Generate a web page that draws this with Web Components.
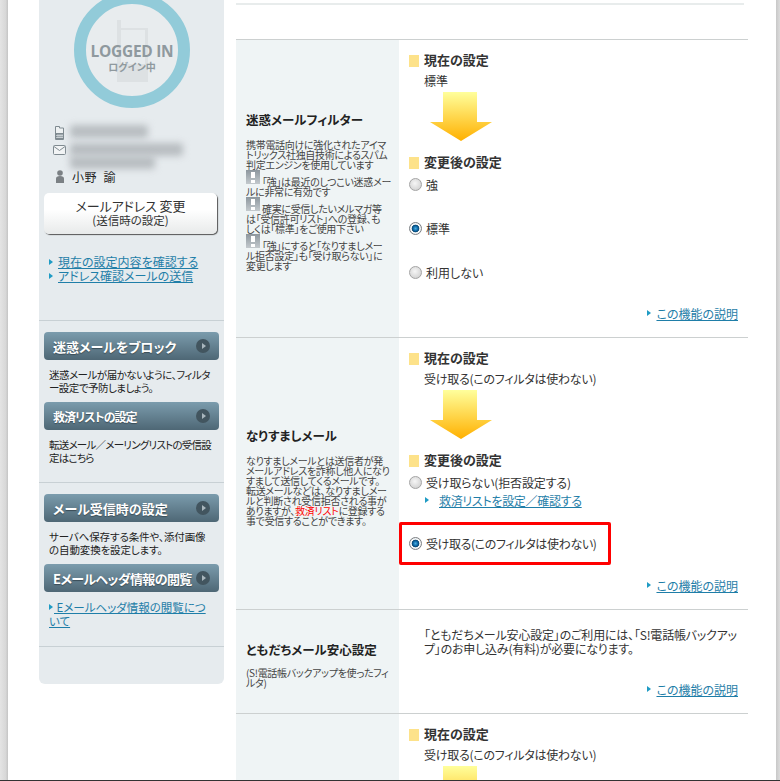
<!DOCTYPE html>
<html lang="ja">
<head>
<meta charset="utf-8">
<title>メール設定</title>
<style>
  html, body { margin: 0; height: 781px; overflow: hidden; background: #fff; }
  body { font-family: "Noto Sans CJK JP", "Liberation Sans", sans-serif; color: #222; font-feature-settings: "palt"; }
</style>
</head>
<body>
<app-page>
  <side-bar slot="side"></side-bar>
  <setting-row slot="main" label-title="迷惑メールフィルター" height="297" pad="14">
    <warn-note slot="desc">携帯電話向けに強化されたアイマ<br>トリックス社独自技術によるスパム<br>判定エンジンを使用しています<br><warn-icon></warn-icon> 「強」は最近のしつこい迷惑メー<br>ルに非常に有効です<br><warn-icon></warn-icon> 確実に受信したいメルマガ等<br>は「受信許可リスト」への登録、も<br>しくは「標準」をご使用下さい<br><warn-icon></warn-icon> 「強」にすると「なりすましメー<br>ル拒否設定」も「受け取らない」に<br>変更します</warn-note>
    <section-head>現在の設定</section-head>
    <current-value>標準</current-value>
    <down-arrow></down-arrow>
    <section-head>変更後の設定</section-head>
    <radio-option>強</radio-option>
    <radio-option gap="30" checked>標準</radio-option>
    <radio-option gap="30">利用しない</radio-option>
    <func-link>この機能の説明</func-link>
  </setting-row>
  <setting-row slot="main" label-title="なりすましメール" height="271" pad="14">
    <warn-note slot="desc">なりすましメールとは送信者が発<br>メールアドレスを詐称し他人になり<br>すまして送信してくるメールです。<br>転送メールなどは、なりすましメー<br>ルと判断され受信拒否される事が<br>ありますが、<span style="color:#f00">救済リスト</span>に登録する<br>事で受信することができます。</warn-note>
    <section-head>現在の設定</section-head>
    <current-value style="letter-spacing:-.25px">受け取る(このフィルタは使わない)</current-value>
    <down-arrow></down-arrow>
    <section-head>変更後の設定</section-head>
    <radio-option style="letter-spacing:-.15px">受け取らない(拒否設定する)</radio-option>
    <sub-link>救済リストを設定／確認する</sub-link>
    <red-frame><radio-option gap="0" checked style="letter-spacing:-.35px">受け取る(このフィルタは使わない)</radio-option></red-frame>
    <func-link>この機能の説明</func-link>
  </setting-row>
  <setting-row slot="main" label-title="ともだちメール安心設定" height="103" pad="18">
    <warn-note slot="desc" style="margin-top:-2px;letter-spacing:-.3px">(S!電話帳バックアップを使ったフィ<br>ルタ)</warn-note>
    <plain-note style="letter-spacing:-.2px">「ともだちメール安心設定」のご利用には、「S!電話帳バックアッ<br>プ」のお申し込み(有料)が必要になります。</plain-note>
    <func-link>この機能の説明</func-link>
  </setting-row>
  <setting-row slot="main" height="66" pad="14" last>
    <section-head>現在の設定</section-head>
    <current-value style="letter-spacing:-.25px">受け取る(このフィルタは使わない)</current-value>
    <down-arrow></down-arrow>
  </setting-row>
</app-page>

<script>
class AppPage extends HTMLElement {
  constructor() {
    super();
    this.attachShadow({ mode: "open" });
    this.shadowRoot.innerHTML = `
      <style>
        :host { display: flex; height: 780px; width: 780px; border-bottom: 1px solid #333; overflow: hidden; box-sizing: content-box; }
        .edge-l { width: 8px; background: linear-gradient(90deg, #e4e4e4, #d8d8d8 70%, #c4c4c4); flex: none; }
        .edge-r { width: 4px; background: linear-gradient(90deg, #c8c8c8, #dcdcdc); flex: none; margin-left: 28px; }
        .side { width: 185px; margin-left: 31px; flex: none; }
        .main { width: 512px; margin-left: 12px; flex: none; }
        .topbar { height: 2px; width: 508px; margin-top: 3px; background: #e8ecec; }
        .gap { height: 34px; border-bottom: 1px solid #ccd0d0; }
      </style>
      <div class="edge-l"></div>
      <div class="side"><slot name="side"></slot></div>
      <div class="main">
        <div class="topbar"></div>
        <div class="gap"></div>
        <slot name="main"></slot>
      </div>
      <div class="edge-r"></div>
    `;
  }
}

class SideBar extends HTMLElement {
  constructor() {
    super();
    this.attachShadow({ mode: "open" });
    this.shadowRoot.innerHTML = `
      <style>
        :host { display: block; height: 684px; background: #e6ebee; border-radius: 0 0 6px 6px; overflow: hidden; font-size: 11px; line-height: 13px; color: #222; }
        .top { height: 328px; }
        .mid { height: 150px; border-top: 1px solid #c8d0d4; padding: 11px 5px 0; }
        .mid2 { height: 152px; border-top: 1px solid #c8d0d4; padding: 11px 5px 0; }
        .end { border-top: 1px solid #c8d0d4; }
        .account { padding: 0 5px; }
        .links { margin: 21px 0 0 5px; font-size: 12px; line-height: 14px; }
        .links div { white-space: nowrap; }
        a { color: #1f7ea8; text-decoration: underline; }
        .links tri-mark { margin-right: 5px; }
        .elink { font-size: 11.500px; margin-left: 1px; }
      </style>
      <div class="top">
        <login-badge></login-badge>
        <user-info></user-info>
        <div class="account">
          <address-button></address-button>
          <div class="links">
            <div><tri-mark></tri-mark><a href="#">現在の設定内容を確認する</a></div>
            <div><tri-mark></tri-mark><a href="#">アドレス確認メールの送信</a></div>
          </div>
        </div>
      </div>
      <div class="mid">
        <side-button>迷惑メールをブロック</side-button>
        <side-note style="letter-spacing:-.5px">迷惑メールが届かないように、フィルタ<br>ー設定で予防しましょう。</side-note>
        <side-button style="letter-spacing:-1px;font-size:12px">救済リストの設定</side-button>
        <side-note style="letter-spacing:-.75px">転送メール／メーリングリストの受信設<br>定はこちら</side-note>
      </div>
      <div class="mid2">
        <side-button>メール受信時の設定</side-button>
        <side-note style="letter-spacing:-.12px">サーバへ保存する条件や、添付画像<br>の自動変換を設定します。</side-note>
        <side-button style="letter-spacing:-.6px">Eメールヘッダ情報の閲覧</side-button>
        <side-note><tri-mark></tri-mark><a class="elink" href="#"> Eメールヘッダ情報の閲覧につ<br>いて</a></side-note>
      </div>
      <div class="end"></div>
    `;
  }
}

class LoginBadge extends HTMLElement {
  constructor() {
    super();
    this.attachShadow({ mode: "open" });
    this.shadowRoot.innerHTML = `
      <style>
        :host { display: block; position: relative; width: 116px; height: 116px; margin: -8px 0 0 35px; }
        svg { display: block; }
        .t { position: absolute; left: 0; right: 0; text-align: center; color: #8f999e; white-space: nowrap; font-family: "Open Sans", "Liberation Sans", sans-serif; }
        .en { top: 49px; font-size: 15.500px; line-height: 20px; font-weight: 700; letter-spacing: -.3px; }
        .ja { top: 69px; font-size: 10px; line-height: 12px; font-weight: 700; font-family: "Noto Sans CJK JP", sans-serif; }
      </style>
      <svg width="116" height="116" viewBox="0 0 116 116">
        <circle cx="58" cy="58" r="52" fill="#e8ecee" stroke="#92cbd9" stroke-width="12"/>
        <path d="M43 28h4v8h27v54H43z" fill="#dde1e3"/>
        <path d="M47 38h24v34H47z" fill="#e8ecee"/>
      </svg>
      <div class="t en">LOGGED IN</div>
      <div class="t ja">ログイン中</div>
    `;
  }
}

class UserInfo extends HTMLElement {
  constructor() {
    super();
    this.attachShadow({ mode: "open" });
    this.shadowRoot.innerHTML = `
      <style>
        :host { display: grid; grid-template-columns: 17px 1fr; margin: 16px 0 10px 14px; height: 59px; grid-template-rows: 18px 28px 13px; font-size: 12px; }
        svg { display: block; }
        .blur { background: #b8bdc1; filter: blur(3.500px); height: 13px; border-radius: 3px; }
        .name { line-height: 13px; padding-left: 2px; letter-spacing: .5px; white-space: pre; }
      </style>
      <svg width="9" height="14" viewBox="0 0 9 14" style="margin:2px 0 0 2px">
        <path d="M.5.500h4V2h4v11.500H.5z" fill="#eef1f2" stroke="#7f8a90"/>
        <path d="M1 7h7v6H1z" fill="#7f8a90"/>
        <path d="M3 8v4M5 8v4M7 8v4M1 9.500h7M1 11.500h7" stroke="#e6ebee" stroke-width=".6"/>
      </svg>
      <div class="blur" style="width:78px;margin-top:1px"></div>
      <svg width="13" height="10" viewBox="0 0 13 10" style="margin:3px 0 0 0">
        <rect x=".5" y=".5" width="12" height="9" rx="1" fill="#f2f4f5" stroke="#7f8a90"/>
        <path d="M1 1.500l5.500 4 5.500-4" fill="none" stroke="#7f8a90"/>
      </svg>
      <div style="display:flex;flex-direction:column;padding-top:1px">
        <div class="blur" style="width:113px"></div>
        <div class="blur" style="width:85px"></div>
      </div>
      <svg width="10" height="13" viewBox="0 0 10 13" style="margin-left:2px">
        <circle cx="5" cy="3" r="2.800" fill="#7b8084"/>
        <path d="M1 13V8.500Q1 6 5 6t4 2.500V13z" fill="#7b8084"/>
      </svg>
      <div class="name">小野  諭</div>
    `;
  }
}

class AddressButton extends HTMLElement {
  constructor() {
    super();
    this.attachShadow({ mode: "open" });
    this.shadowRoot.innerHTML = `
      <style>
        :host { display: block; height: 41px; border-radius: 5px; background: linear-gradient(#fff 40%, #e8eaea); box-shadow: 1px 1px 1px #555; text-align: center; color: #333; width: 173px; }
        .a { padding-top: 5px; font-size: 13px; line-height: 15px; letter-spacing: -.1px; }
        .b { font-size: 11.500px; line-height: 15px; }
      </style>
      <div class="a">メールアドレス 変更</div>
      <div class="b">(送信時の設定)</div>
    `;
  }
}

class SideButton extends HTMLElement {
  constructor() {
    super();
    this.attachShadow({ mode: "open" });
    this.shadowRoot.innerHTML = `
      <style>
        :host { display: flex; align-items: center; justify-content: space-between; height: 28px; width: 175px; box-sizing: border-box; padding: 0 9px; border-radius: 4px; background: linear-gradient(#7b9cad, #4e6775); color: #fff; font-weight: 700; font-size: 13px; white-space: nowrap; text-shadow: 0 1px 1px #3a4c56; }
        i { flex: none; width: 14px; height: 14px; border-radius: 50%; background: #42555f; position: relative; }
        i::after { content: ""; position: absolute; left: 6px; top: 4px; border-left: 4px solid #a9b6bd; border-top: 3px solid transparent; border-bottom: 3px solid transparent; }
      </style>
      <span><slot></slot></span><i></i>
    `;
  }
}

class SideNote extends HTMLElement {
  constructor() {
    super();
    this.attachShadow({ mode: "open" });
    this.shadowRoot.innerHTML = `
      <style>
        :host { display: block; height: 42px; padding-top: 9px; margin-left: 5px; box-sizing: border-box; font-size: 10.500px; line-height: 12.500px; white-space: nowrap; color: #222; }
      </style>
      <slot></slot>
    `;
  }
}

class TriMark extends HTMLElement {
  constructor() {
    super();
    this.attachShadow({ mode: "open" });
    this.shadowRoot.innerHTML = `
      <style>
        :host { display: inline-block; width: 0; height: 0; vertical-align: 2px; border-left: 4px solid #1f9bc4; border-top: 3px solid transparent; border-bottom: 3px solid transparent; }
      </style>
    `;
  }
}

class SettingRow extends HTMLElement {
  constructor() {
    super();
    this.attachShadow({ mode: "open" });
    const title = this.getAttribute("label-title");
    this.shadowRoot.innerHTML = `
      <style>
        :host { display: flex; height: ${this.getAttribute("height")}px; border-bottom: 1px solid #ccd0d0; }
        :host([last]) { border-bottom: 0; }
        .label { width: 153px; padding: 6px 0 0 10px; background: #eff4f5; flex: none; display: flex; flex-direction: column; justify-content: center; }
        .title { font-size: 12.500px; font-weight: 700; line-height: 16px; color: #222; white-space: nowrap; margin-bottom: 12px; }
        .content { flex: 1; padding: ${this.getAttribute("pad")}px 10px 17px 10px; display: flex; flex-direction: column; overflow: hidden; min-width: 0; }
      </style>
      <div class="label">
        ${title ? `<div class="title">${title}</div>` : ""}
        <slot name="desc"></slot>
      </div>
      <div class="content"><slot></slot></div>
    `;
  }
}

class WarnNote extends HTMLElement {
  constructor() {
    super();
    this.attachShadow({ mode: "open" });
    this.shadowRoot.innerHTML = `
      <style>
        :host { display: block; font-size: 10px; line-height: 10px; letter-spacing: -.3px; color: #444; white-space: nowrap; }
      </style>
      <slot></slot>
    `;
  }
}

class WarnIcon extends HTMLElement {
  constructor() {
    super();
    this.attachShadow({ mode: "open" });
    this.shadowRoot.innerHTML = `
      <style>
        :host { display: inline-block; width: 14px; height: 14px; background: linear-gradient(#8d979e, #c3c9cd); position: relative; vertical-align: 2px; }
        i { position: absolute; left: 5px; top: 2px; width: 4px; height: 6px; background: #fff; }
        b { position: absolute; left: 5px; top: 10px; width: 4px; height: 3px; background: #fff; }
      </style>
      <i></i><b></b>
    `;
  }
}

class SectionHead extends HTMLElement {
  constructor() {
    super();
    this.attachShadow({ mode: "open" });
    this.shadowRoot.innerHTML = `
      <style>
        :host { display: flex; align-items: center; height: 14px; gap: 5px; font-size: 13px; font-weight: 700; color: #333; white-space: nowrap; }
        i { width: 10px; height: 12px; background: #fde28a; flex: none; }
        span { margin-bottom: 4px; }
      </style>
      <i></i><span><slot></slot></span>
    `;
  }
}

class CurrentValue extends HTMLElement {
  constructor() {
    super();
    this.attachShadow({ mode: "open" });
    this.shadowRoot.innerHTML = `
      <style>
        :host { display: block; margin: 6px 0 0 15px; height: 14px; line-height: 14px; font-size: 12px; color: #333; white-space: nowrap; }
      </style>
      <slot></slot>
    `;
  }
}

class DownArrow extends HTMLElement {
  constructor() {
    super();
    this.attachShadow({ mode: "open" });
    this.shadowRoot.innerHTML = `
      <style>
        :host { display: block; flex: none; width: 62px; height: 49px; margin: 4px 0 15px 21px; }
        svg { display: block; }
      </style>
      <svg width="62" height="49" viewBox="0 0 62 49">
        <defs><linearGradient id="g" x1="0" y1="0" x2="0" y2="1">
          <stop offset="0" stop-color="#ffff9c"/><stop offset="1" stop-color="#ffb000"/>
        </linearGradient></defs>
        <path d="M13 0h34v30h15L31 49 0 30h13z" fill="url(#g)"/>
      </svg>
    `;
  }
}

class RadioOption extends HTMLElement {
  constructor() {
    super();
    this.attachShadow({ mode: "open" });
    const gap = this.getAttribute("gap") || "7";
    this.shadowRoot.innerHTML = `
      <style>
        :host { display: flex; align-items: center; gap: 4px; height: 14px; margin-top: ${gap}px; font-size: 12px; color: #333; white-space: nowrap; }
        i { width: 13px; height: 13px; border-radius: 50%; flex: none; box-sizing: border-box; border: 1px solid #a4a4a4; background: radial-gradient(circle at 45% 40%, #f6f6f6, #d2d2d2 80%); }
        :host([checked]) i { border-color: #7c8084; background: radial-gradient(circle at 50% 50%, #49aee0 0, #0a62a2 2.500px, #08466f 3.500px, #fff 4.200px, #d8dbdd 6.500px); }
      </style>
      <i></i><span><slot></slot></span>
    `;
  }
}

class SubLink extends HTMLElement {
  constructor() {
    super();
    this.attachShadow({ mode: "open" });
    this.shadowRoot.innerHTML = `
      <style>
        :host { display: flex; align-items: center; gap: 10px; height: 14px; margin: 4px 0 0 16px; font-size: 12px; letter-spacing: -.3px; white-space: nowrap; }
        a { color: #1f7ea8; }
      </style>
      <tri-mark></tri-mark><a href="#"><slot></slot></a>
    `;
  }
}

class RedFrame extends HTMLElement {
  constructor() {
    super();
    this.attachShadow({ mode: "open" });
    this.shadowRoot.innerHTML = `
      <style>
        :host { display: flex; align-items: center; width: 212px; height: 43px; box-sizing: border-box; margin: 15px 0 0 -10px; padding-left: 7px; border: 3px solid #f00; border-radius: 2px; }
      </style>
      <slot></slot>
    `;
  }
}

class FuncLink extends HTMLElement {
  constructor() {
    super();
    this.attachShadow({ mode: "open" });
    this.shadowRoot.innerHTML = `
      <style>
        :host { display: flex; align-items: center; justify-content: flex-end; gap: 5px; height: 14px; margin-top: auto; font-size: 12px; white-space: nowrap; }
        a { color: #1f7ea8; }
      </style>
      <tri-mark></tri-mark><a href="#"><slot></slot></a>
    `;
  }
}

class PlainNote extends HTMLElement {
  constructor() {
    super();
    this.attachShadow({ mode: "open" });
    this.shadowRoot.innerHTML = `
      <style>
        :host { display: block; margin-left: 15px; font-size: 12px; line-height: 14px; color: #333; white-space: nowrap; }
      </style>
      <slot></slot>
    `;
  }
}

customElements.define("app-page", AppPage);
customElements.define("side-bar", SideBar);
customElements.define("login-badge", LoginBadge);
customElements.define("user-info", UserInfo);
customElements.define("address-button", AddressButton);
customElements.define("side-button", SideButton);
customElements.define("side-note", SideNote);
customElements.define("tri-mark", TriMark);
customElements.define("setting-row", SettingRow);
customElements.define("warn-note", WarnNote);
customElements.define("warn-icon", WarnIcon);
customElements.define("section-head", SectionHead);
customElements.define("current-value", CurrentValue);
customElements.define("down-arrow", DownArrow);
customElements.define("radio-option", RadioOption);
customElements.define("sub-link", SubLink);
customElements.define("red-frame", RedFrame);
customElements.define("func-link", FuncLink);
customElements.define("plain-note", PlainNote);
</script>
</body>
</html>
